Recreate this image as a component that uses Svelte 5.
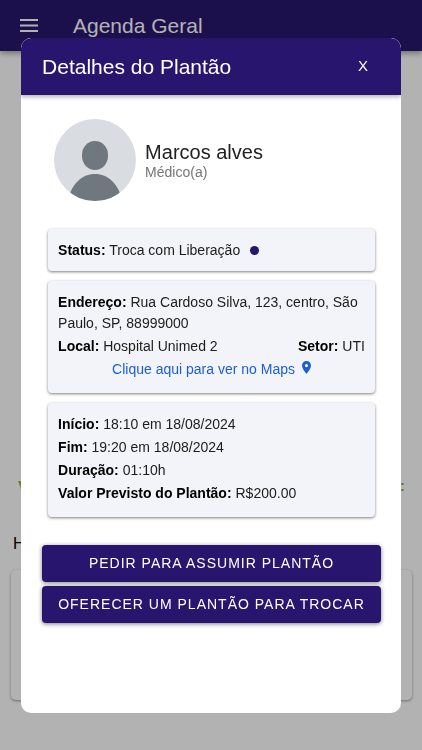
<script lang="ts">
	interface Props {
		onClose?: () => void;
		onRequest?: () => void;
		onOffer?: () => void;
	}

	let { onClose, onRequest, onOffer }: Props = $props();

	const shift = {
		name: 'Marcos alves',
		role: 'Médico(a)',
		status: 'Troca com Liberação',
		address: 'Rua Cardoso Silva, 123, centro, São Paulo, SP, 88999000',
		place: 'Hospital Unimed 2',
		sector: 'UTI'
	};

	const details = [
		{ label: 'Início', value: '18:10 em 18/08/2024' },
		{ label: 'Fim', value: '19:20 em 18/08/2024' },
		{ label: 'Duração', value: '01:10h' },
		{ label: 'Valor Previsto do Plantão', value: 'R$200.00' }
	];
</script>

<div class="page">
	<header class="app-bar">
		<button class="menu-button" aria-label="Menu">
			<svg viewBox="0 0 18 13" width="18" height="13">
				<path d="M0 0h18v2H0zM0 5.5h18v2H0zM0 11h18v2H0z" fill="currentColor" />
			</svg>
		</button>
		<h1>Agenda Geral</h1>
	</header>

	<main class="agenda">
		<p class="summary"><span>V</span><span>:</span></p>
		<p class="day">H</p>
		<div class="day-card"></div>
	</main>
</div>

<div class="backdrop">
	<div class="modal" role="dialog" aria-modal="true" aria-labelledby="modal-title">
		<header class="modal-header">
			<h2 id="modal-title">Detalhes do Plantão</h2>
			<button class="close-button" onclick={onClose}>X</button>
		</header>

		<div class="modal-body">
			<div class="info">
				<div class="person">
					<svg class="avatar" viewBox="0 0 82 82" aria-hidden="true">
						<clipPath id="avatar-clip"><circle cx="41" cy="41" r="41" /></clipPath>
						<circle cx="41" cy="41" r="41" fill="#d9dce1" />
						<g clip-path="url(#avatar-clip)" fill="#6f787f">
							<rect x="28" y="22" width="26" height="29" rx="13" ry="14" />
							<path d="M14 82C17 65 28 55 41 55s24 10 27 27z" />
						</g>
					</svg>
					<div>
						<p class="name">{shift.name}</p>
						<p class="role">{shift.role}</p>
					</div>
				</div>

				<section class="card status">
					<p><strong>Status:</strong> {shift.status}</p>
					<span class="dot"></span>
				</section>

				<section class="card">
					<p><strong>Endereço:</strong> {shift.address}</p>
					<div class="row">
						<p><strong>Local:</strong> {shift.place}</p>
						<p><strong>Setor:</strong> {shift.sector}</p>
					</div>
					<a class="maps-link" href="#maps">
						Clique aqui para ver no Maps
						<svg viewBox="5 2 14 20" width="9" height="13" aria-hidden="true">
							<path
								d="M12 2C8.13 2 5 5.13 5 9c0 5.25 7 13 7 13s7-7.75 7-13c0-3.87-3.13-7-7-7zm0 9.5a2.5 2.5 0 0 1 0-5 2.5 2.5 0 0 1 0 5z"
								fill="currentColor"
							/>
						</svg>
					</a>
				</section>

				<section class="card">
					{#each details as item (item.label)}
						<p><strong>{item.label}:</strong> {item.value}</p>
					{/each}
				</section>
			</div>

			<div class="actions">
				<button onclick={onRequest}>Pedir para assumir plantão</button>
				<button onclick={onOffer}>Oferecer um plantão para trocar</button>
			</div>
		</div>
	</div>
</div>

<style>
	:global(body) {
		margin: 0;
		background: #fff;
		font-family: 'Liberation Sans', Arial, sans-serif;
	}

	h1,
	h2,
	p {
		margin: 0;
	}

	button {
		border: none;
		font-family: inherit;
		cursor: pointer;
	}

	.page {
		min-height: 100vh;
		color: #000;
	}

	.app-bar {
		display: flex;
		align-items: center;
		gap: 35px;
		height: 51px;
		padding: 0 20px;
		background: #28166e;
		color: #fff;
		box-shadow: 0 2px 6px rgba(0, 0, 0, 0.4);
	}

	.menu-button {
		display: flex;
		padding: 0;
		background: none;
		color: inherit;
	}

	.app-bar h1,
	.modal-header h2 {
		font-size: 21px;
		font-weight: 400;
		line-height: 28px;
	}

	.agenda {
		padding: 424px 10px 0 11px;
	}

	.summary {
		display: flex;
		justify-content: space-between;
		padding: 0 7px;
		font-size: 15px;
		font-weight: 700;
		line-height: 22px;
		color: #7cb82f;
	}

	.day {
		margin-top: 36px;
		padding-left: 2px;
		font-size: 16px;
		line-height: 22px;
	}

	.day-card {
		height: 130px;
		margin-top: 15px;
		border-radius: 5px;
		box-shadow: 0 1px 3px rgba(0, 0, 0, 0.4);
	}

	.backdrop {
		position: fixed;
		inset: 0;
		display: flex;
		align-items: center;
		justify-content: center;
		background: rgba(0, 0, 0, 0.3);
	}

	.modal {
		width: 90%;
		height: 90%;
		overflow: auto;
		border-radius: 10px;
		background: #fff;
	}

	.modal-header {
		display: flex;
		align-items: center;
		justify-content: space-between;
		padding: 15px 27px 14px 21px;
		border-radius: 10px 10px 0 0;
		background: #28166e;
		color: #fff;
		box-shadow: 0 2px 4px rgba(0, 0, 0, 0.3);
	}

	.close-button {
		padding: 0 6px 2px;
		background: none;
		color: inherit;
		font-size: 15px;
		line-height: 22px;
	}

	.modal-body {
		display: flex;
		flex-direction: column;
		gap: 28px;
		padding: 24px 20px 24px 21px;
	}

	.info {
		display: flex;
		flex-direction: column;
		gap: 10px;
		padding: 0 6px;
	}

	.person {
		display: flex;
		align-items: center;
		gap: 9px;
		margin-bottom: 18px;
		padding-left: 6px;
	}

	.avatar {
		width: 82px;
		height: 82px;
		flex-shrink: 0;
	}

	.name {
		padding-top: 2px;
		font-size: 20px;
		line-height: 22px;
		color: #212121;
	}

	.role {
		font-size: 14px;
		line-height: 18px;
		color: #757575;
	}

	.card {
		display: flex;
		flex-direction: column;
		gap: 2px;
		padding: 11px 10px 13px;
		border-radius: 4px;
		background: #f3f4f9;
		box-shadow: 0 1px 3px rgba(0, 0, 0, 0.5);
		font-size: 14px;
		line-height: 21px;
		color: #1c1c1c;
	}

	.card strong {
		color: #000;
	}

	.status {
		flex-direction: row;
		align-items: center;
		gap: 10px;
		padding-bottom: 10px;
	}

	.dot {
		width: 9px;
		height: 9px;
		border-radius: 50%;
		background: #28166e;
	}

	.row {
		display: flex;
		justify-content: space-between;
	}

	.maps-link {
		align-self: center;
		color: #1a5fd8;
		text-decoration: none;
	}

	.maps-link svg {
		margin-left: 3px;
	}

	.actions {
		display: flex;
		flex-direction: column;
		gap: 4px;
	}

	.actions button {
		padding: 8px;
		border-radius: 4px;
		background: #28166e;
		color: #fff;
		font-size: 14px;
		line-height: 21px;
		letter-spacing: 1px;
		text-transform: uppercase;
		box-shadow: 0 1px 4px rgba(0, 0, 0, 0.5);
	}
</style>
